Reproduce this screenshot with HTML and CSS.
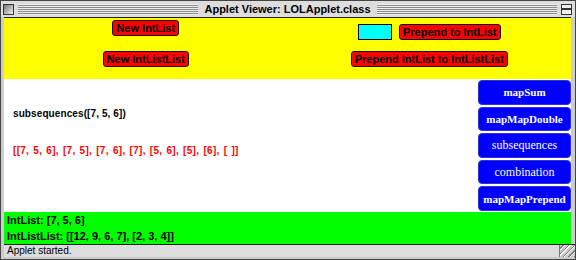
FILE: index.html
```html
<!DOCTYPE html>
<html>
<head>
<meta charset="utf-8">
<link rel="stylesheet" href="styles.css">
</head>
<body>
<div class="window">
  <div class="titlebar">
    <span class="closebox"></span>
    <span class="stripes"></span>
    <span class="title">Applet Viewer: LOLApplet.class</span>
    <span class="stripes"></span>
    <span class="zoombox"><span class="zoominner"></span></span>
  </div>
  <div class="content">
    <div class="controls">
      <div class="cell cell-a"><button class="redbtn">New IntList</button></div>
      <div class="cell cell-b"><span class="field"></span><button class="redbtn">Prepend to IntList</button></div>
      <div class="cell cell-c"><button class="redbtn">New IntListList</button></div>
      <div class="cell cell-d"><button class="redbtn">Prepend IntList to IntListList</button></div>
    </div>
    <div class="middle">
      <div class="output">
        <div class="expr">subsequences([7, 5, 6])</div>
        <div class="result">[[7, 5, 6], [7, 5], [7, 6], [7], [5, 6], [5], [6], [ ]]</div>
      </div>
      <div class="side">
        <button class="bluebtn bold">mapSum</button>
        <button class="bluebtn bold">mapMapDouble</button>
        <button class="bluebtn">subsequences</button>
        <button class="bluebtn">combination</button>
        <button class="bluebtn bold">mapMapPrepend</button>
      </div>
    </div>
    <div class="state">
      <div class="line">IntList: [7, 5, 6]</div>
      <div class="line">IntListList: [[12, 9, 6, 7], [2, 3, 4]]</div>
    </div>
  </div>
  <div class="statusbar">
    <span class="status">Applet started.</span>
    <span class="grip"></span>
  </div>
</div>
</body>
</html>
```

FILE: styles.css
```css
html, body {
  margin: 0;
  padding: 0;
  width: 576px;
  height: 260px;
  overflow: hidden;
  background: #ffffff;
}

.window {
  box-sizing: border-box;
  width: 576px;
  height: 260px;
  background: #cccccc;
  border: 1px solid #444444;
  display: flex;
  flex-direction: column;
  font-family: "Liberation Sans", Arial, sans-serif;
}

.titlebar {
  height: 16px;
  display: flex;
  align-items: center;
  gap: 4px;
  padding: 0 3px 0 2px;
  background: #dddddd;
}

.closebox {
  width: 9px;
  height: 9px;
  border: 1px solid #333333;
  background: linear-gradient(135deg, #777777, #eeeeee);
  flex: none;
}

.stripes {
  flex: 1;
  height: 11px;
  background: repeating-linear-gradient(to bottom, #eeeeee 0, #eeeeee 1px, #8a8a8a 1px, #8a8a8a 2px);
}

.title {
  font-weight: bold;
  font-size: 11px;
  color: #000000;
  padding: 0 2px;
  white-space: nowrap;
}

.zoombox {
  width: 9px;
  height: 9px;
  border: 1px solid #333333;
  background: #eeeeee;
  position: relative;
  flex: none;
}

.zoominner {
  position: absolute;
  left: 0;
  top: 3px;
  width: 9px;
  height: 2px;
  border-top: 1px solid #333333;
  border-bottom: 1px solid #333333;
  box-sizing: border-box;
}

.content {
  margin: 0 4px 0 3px;
  border-top: 1px solid #222222;
  display: flex;
  flex-direction: column;
}

.controls {
  height: 61px;
  background: #ffff00;
  display: grid;
  grid-template-columns: 1fr 1fr;
  grid-template-rows: 31px 30px;
}

.cell {
  display: flex;
  justify-content: center;
  align-items: flex-start;
  gap: 7px;
  padding-top: 2px;
}

.cell-b {
  padding-top: 6px;
}

.redbtn {
  height: 16px;
  box-sizing: border-box;
  margin: 0;
  padding: 0 3px;
  border: 1px solid #111111;
  border-radius: 3px;
  background: #ff0000;
  color: #000000;
  font-family: "Liberation Sans", Arial, sans-serif;
  font-weight: bold;
  font-size: 11px;
  line-height: 13px;
  white-space: nowrap;
}

.field {
  width: 34px;
  height: 16px;
  box-sizing: border-box;
  border: 1px solid #000000;
  background: #00ffff;
}

.middle {
  height: 133px;
  display: flex;
  background: #ffffff;
}

.output {
  flex: 1;
  padding: 29px 0 0 9px;
  font-weight: bold;
  font-size: 10px;
  line-height: 12px;
}

.expr {
  color: #000000;
  letter-spacing: 0.1px;
}

.result {
  color: #ff0000;
  margin-top: 25px;
  letter-spacing: 0.3px;
  word-spacing: 1px;
}

.side {
  width: 93px;
  display: flex;
  flex-direction: column;
  gap: 2px;
  padding: 1px 0;
  box-sizing: border-box;
}

.bluebtn {
  flex: 1;
  margin: 0;
  padding: 0;
  border: 1px solid #3333cc;
  border-radius: 4px;
  background: #0000ff;
  color: #ffffff;
  font-family: "Liberation Serif", "Times New Roman", serif;
  font-size: 12px;
  font-weight: normal;
}

.bluebtn.bold {
  font-weight: bold;
  font-size: 11px;
}

.state {
  height: 32px;
  background: #00ff00;
  padding-left: 3px;
  font-weight: bold;
  font-size: 11px;
  line-height: 16px;
  color: #000000;
}

.statusbar {
  height: 12px;
  margin: 0 0 0 3px;
  border-top: 1px solid #222222;
  display: flex;
  align-items: center;
}

.status {
  flex: 1;
  height: 12px;
  background: #dddddd;
  border-right: 1px solid #777777;
  padding-left: 3px;
  font-size: 10px;
  line-height: 12px;
  color: #000000;
}

.grip {
  width: 15px;
  height: 12px;
  background: repeating-linear-gradient(135deg, #cccccc 0, #cccccc 2px, #777777 2px, #777777 3px, #ffffff 3px, #ffffff 4px);
}
```
